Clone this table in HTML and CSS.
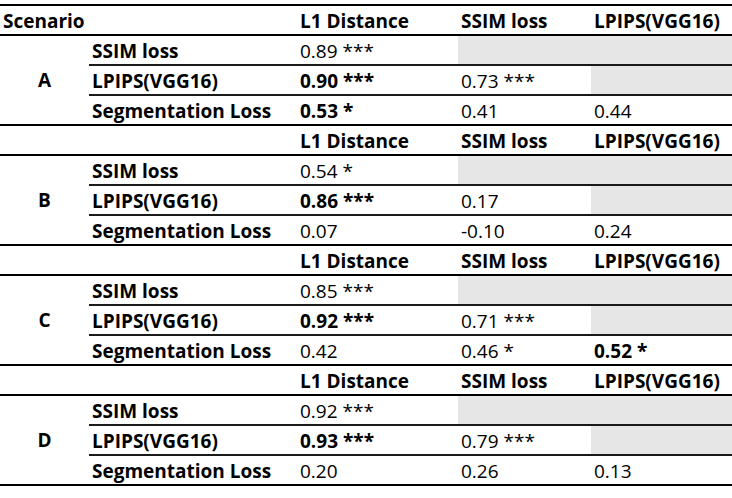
FILE: index.html
```html
<!DOCTYPE html>
<html>
<head>
<meta charset="utf-8">
<link rel="stylesheet" href="styles.css">
</head>
<body>
<table class="results">
  <colgroup>
    <col class="c-scen"><col class="c-label"><col class="c-l1"><col class="c-ssim"><col class="c-lpips">
  </colgroup>
  <tr class="head first">
    <th colspan="2" class="scen-title">Scenario</th>
    <th>L1 Distance</th><th>SSIM loss</th><th>LPIPS(VGG16)</th>
  </tr>
  <tr class="row">
    <td rowspan="3" class="letter">A</td>
    <td class="label">SSIM loss</td><td>0.89 ***</td><td class="grey"></td><td class="grey"></td>
  </tr>
  <tr class="row">
    <td class="label">LPIPS(VGG16)</td><td class="b">0.90 ***</td><td>0.73 ***</td><td class="grey"></td>
  </tr>
  <tr class="row last">
    <td class="label">Segmentation Loss</td><td class="b">0.53 *</td><td>0.41</td><td>0.44</td>
  </tr>

  <tr class="head">
    <td colspan="2"></td>
    <th>L1 Distance</th><th>SSIM loss</th><th>LPIPS(VGG16)</th>
  </tr>
  <tr class="row">
    <td rowspan="3" class="letter">B</td>
    <td class="label">SSIM loss</td><td>0.54 *</td><td class="grey"></td><td class="grey"></td>
  </tr>
  <tr class="row">
    <td class="label">LPIPS(VGG16)</td><td class="b">0.86 ***</td><td>0.17</td><td class="grey"></td>
  </tr>
  <tr class="row last">
    <td class="label">Segmentation Loss</td><td>0.07</td><td>-0.10</td><td>0.24</td>
  </tr>

  <tr class="head">
    <td colspan="2"></td>
    <th>L1 Distance</th><th>SSIM loss</th><th>LPIPS(VGG16)</th>
  </tr>
  <tr class="row">
    <td rowspan="3" class="letter">C</td>
    <td class="label">SSIM loss</td><td>0.85 ***</td><td class="grey"></td><td class="grey"></td>
  </tr>
  <tr class="row">
    <td class="label">LPIPS(VGG16)</td><td class="b">0.92 ***</td><td>0.71 ***</td><td class="grey"></td>
  </tr>
  <tr class="row last">
    <td class="label">Segmentation Loss</td><td>0.42</td><td>0.46 *</td><td class="b">0.52 *</td>
  </tr>

  <tr class="head">
    <td colspan="2"></td>
    <th>L1 Distance</th><th>SSIM loss</th><th>LPIPS(VGG16)</th>
  </tr>
  <tr class="row">
    <td rowspan="3" class="letter">D</td>
    <td class="label">SSIM loss</td><td>0.92 ***</td><td class="grey"></td><td class="grey"></td>
  </tr>
  <tr class="row">
    <td class="label">LPIPS(VGG16)</td><td class="b">0.93 ***</td><td>0.79 ***</td><td class="grey"></td>
  </tr>
  <tr class="row last">
    <td class="label">Segmentation Loss</td><td>0.20</td><td>0.26</td><td>0.13</td>
  </tr>
</table>
</body>
</html>
```

FILE: styles.css
```css
html, body {
  margin: 0;
  padding: 0;
  background: #ffffff;
}

.results {
  margin-top: 4px;
  width: 732px;
  border-collapse: collapse;
  table-layout: fixed;
  font-family: "Open Sans", Lato, "Liberation Sans", sans-serif;
  font-size: 19px;
  color: #000;
}

.c-scen { width: 89px; }
.c-label { width: 208px; }
.c-l1 { width: 161px; }
.c-ssim { width: 133px; }
.c-lpips { width: 141px; }

.results tr {
  height: 30px;
}

.results th,
.results td {
  padding: 0 0 2px 3px;
  vertical-align: bottom;
  text-align: left;
  white-space: nowrap;
  line-height: 22px;
}

.results th { font-weight: bold; }

.head th, .head td {
  border-bottom: 2px solid #000;
}
.head.first th { border-top: 2px solid #000; }

.row .label {
  font-weight: bold;
}
.row td {
  border-bottom: 2px solid #1a1a1a;
}
.row.last td {
  border-bottom: 2px solid #000;
}
.results .letter {
  font-weight: bold;
  text-align: center;
  vertical-align: middle;
  padding: 0;
  border-bottom: 2px solid #000;
}

.b { font-weight: bold; }

.grey { background: #e6e6e6; }
```
